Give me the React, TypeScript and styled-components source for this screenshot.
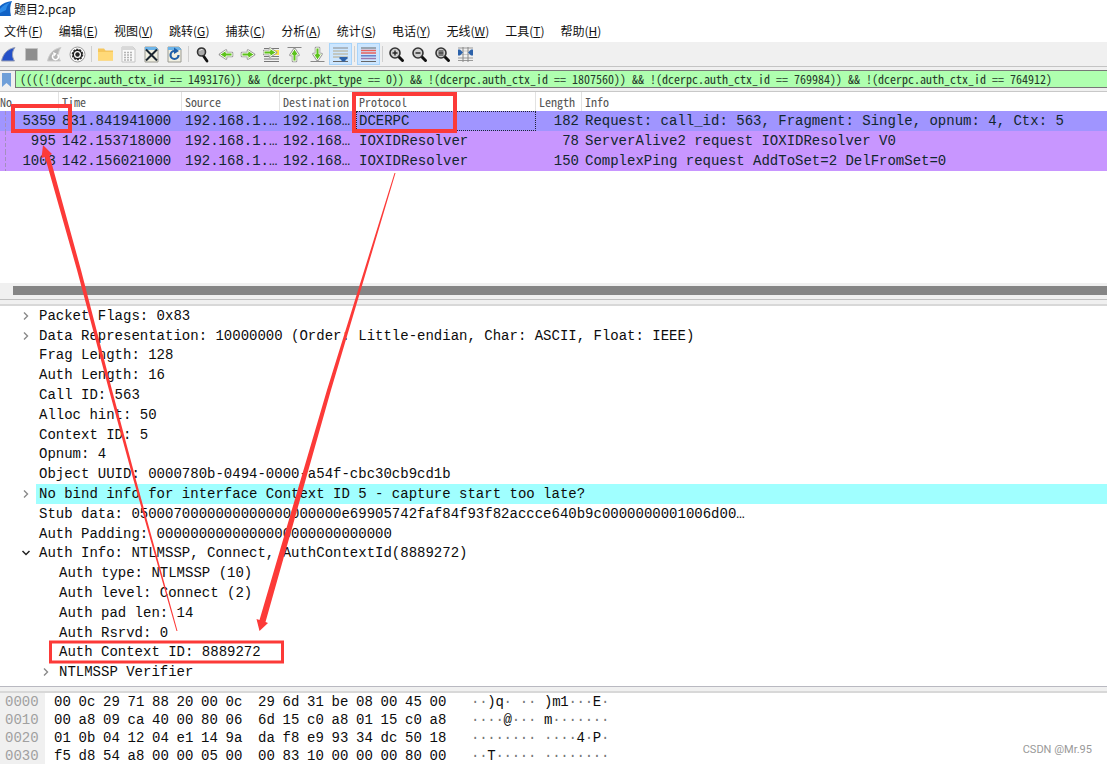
import React from 'react';
import styled, { createGlobalStyle, css } from 'styled-components';

const MONO = '"Liberation Mono", monospace';
const NARROW = '"Noto Sans Mono CJK SC", "Liberation Mono", monospace';
const UI = '"Noto Sans CJK SC", "Open Sans", sans-serif';

const GlobalStyle = createGlobalStyle`
  * { box-sizing: border-box; }
  body { margin: 0; background: #fff; color: #111; font-family: ${UI}; }
`;

const Page = styled.div`
  position: relative;
  display: flex;
  flex-direction: column;
  min-height: 100vh;
  overflow: hidden;
`;

const TitleBar = styled.header`
  display: flex;
  align-items: center;
  gap: 2px;
  height: 20px;
  font-size: 12px;
  line-height: 18px;
  padding-bottom: 2px;
`;

const MenuBar = styled.nav`
  display: flex;
  align-items: center;
  gap: 16px;
  height: 22px;
  padding-left: 4px;
`;

const MenuButton = styled.button`
  padding: 0;
  border: 0;
  background: none;
  color: #111;
  font: 12px/18px ${UI};
`;

const Toolbar = styled.div`
  display: flex;
  align-items: center;
  height: 25px;
  background: #f0f0f0;
  border-bottom: 1px solid #c4c4c4;
`;

const ToolGroup = styled.div`
  display: flex;
  &:first-child { margin-left: -3px; }
`;

const ToolButton = styled.button<{ $on?: boolean }>`
  display: flex;
  align-items: center;
  justify-content: center;
  width: 23px;
  height: 22px;
  padding: 0;
  border: 1px solid ${p => (p.$on ? '#a8d4fa' : 'transparent')};
  background: ${p => (p.$on ? '#cce6ff' : 'none')};
`;

const ToolDivider = styled.span`
  width: 5px;
  height: 16px;
  background: linear-gradient(#cfcfcf, #cfcfcf) center / 1px 100% no-repeat;
`;

const FilterBar = styled.div`
  display: flex;
  height: 25px;
  padding: 3px 0 3px;
  background: #f0f0f0;
  border-bottom: 1px solid #c8c8c8;
`;

const BookmarkButton = styled.button`
  display: flex;
  align-items: center;
  justify-content: center;
  width: 15px;
  padding: 0 2px 0 0;
  border: 0;
  border-top: 1px solid #9a9a9a;
  background: #f0f0f0;
`;

const FilterInput = styled.input`
  flex: 1;
  min-width: 0;
  padding: 0 4px;
  border: 1px solid #777;
  border-right: 0;
  background: #afffaf;
  color: #26382a;
  font: 12px/16px ${NARROW};
  outline: 0;
`;

const PacketPane = styled.section`
  display: flex;
  flex-direction: column;
  height: 208px;
`;

const PacketTable = styled.table`
  width: 100%;
  table-layout: fixed;
  border-collapse: separate;
  border-spacing: 0;
  font: 14px/18px ${MONO};
`;

const HeadCell = styled.th`
  height: 19px;
  padding: 0 0 0 3px;
  border-right: 1px solid #e2e2e2;
  color: #555;
  font: 12px/18px ${NARROW};
  text-align: left;
  white-space: nowrap;
  &:first-child { padding-left: 0; }
  &:last-child { border-right: 0; }
`;

const PacketRow = styled.tr<{ $selected?: boolean }>`
  background: ${p => (p.$selected ? '#a095ff' : '#c896ff')};
  color: #12272e;
`;

const Cell = styled.td<{ $right?: boolean; $focus?: boolean }>`
  height: 20px;
  padding: 0 3px;
  white-space: nowrap;
  text-align: ${p => (p.$right ? 'right' : 'left')};
  ${p => p.$focus && css`
    outline: 1px dotted #223;
    outline-offset: -1px;
  `}
  &:first-child {
    background: repeating-linear-gradient(#a58fbe 0 4px, transparent 4px 6px) 5px 0 / 1px 100% no-repeat;
  }
`;

const ScrollTrack = styled.div`
  margin-top: auto;
  height: 17px;
  padding: 3px 0 4px 13px;
  background: #f0f0f0;
  border-bottom: 1px solid #c0c0c0;
`;

const ScrollThumb = styled.div`
  height: 9px;
  background: #858585;
`;

const Splitter = styled.div`
  height: 6px;
  background: #f0f0f0;
  border-bottom: 2px solid #d8d8d8;
`;

const DetailPane = styled.section`
  flex: 1;
  display: flex;
  padding-bottom: 4px;
  border-bottom: 1px solid #b9b9c1;
`;

const Tree = styled.ul`
  flex: 1;
  display: grid;
  grid-auto-rows: minmax(19px, 1fr);
  margin: 0;
  padding: 0;
  list-style: none;
  color: #0c0c0c;
  font: 14px/18px ${MONO};
`;

const TreeItem = styled.li<{ $level: number }>`
  display: flex;
  align-items: stretch;
  padding-left: ${p => 16 + p.$level * 20}px;
`;

const Twisty = styled.button`
  display: flex;
  align-items: center;
  justify-content: center;
  width: 20px;
  padding: 0;
  border: 0;
  background: none;
`;

const TwistySpace = styled.span`
  width: 20px;
`;

const TreeText = styled.span<{ $mark?: boolean }>`
  flex: 1;
  display: flex;
  align-items: center;
  padding-left: 3px;
  white-space: pre;
  background: ${p => (p.$mark ? '#a0ffff' : 'none')};
`;

const HexPane = styled.section`
  height: 71px;
  background: linear-gradient(90deg, #f0f0f0 45px, #fff 45px);
  color: #0c0c0c;
  font: 14px/18px ${MONO};
`;

const HexRow = styled.div`
  display: flex;
  height: 18px;
`;

const Offset = styled.span`
  width: 54px;
  padding-left: 5px;
  color: #a0a0a0;
`;

const ByteGroup = styled.span`
  display: grid;
  grid-template-columns: repeat(8, minmax(0, 1fr));
  width: 196px;
  margin-right: 8px;
`;

const AsciiGroup = styled.span`
  display: grid;
  grid-template-columns: repeat(8, minmax(0, 1fr));
  width: 65px;
  margin-right: 8px;
  &:nth-last-child(2) { margin-left: 9px; }
`;

const AsciiChar = styled.span<{ $dot: boolean }>`
  color: ${p => (p.$dot ? '#777' : '#0c0c0c')};
`;

const Watermark = styled.span`
  position: absolute;
  right: 15px;
  bottom: 6px;
  color: #999;
  font: 11px/16px Roboto, sans-serif;
`;

const Annotations = styled.svg`
  position: absolute;
  left: 0;
  top: 0;
  pointer-events: none;
`;

const Icon = ({ children }: { children: React.ReactNode }) => (
  <svg width="17" height="17" viewBox="0 0 17 17" fill="none" aria-hidden="true">{children}</svg>
);

const FileBase = ({ faded }: { faded?: boolean }) => (
  <>
    <path d="M2 1h11l2 2v13H2z" fill={faded ? '#fafafa' : '#f1f0e2'} stroke={faded ? '#c4c4c4' : '#9a9a92'} />
    <path d="M2 1h11l2 2v1H2z" fill={faded ? '#d8d8d8' : '#6db4e8'} />
  </>
);

const Lens = ({ children }: { children?: React.ReactNode }) => (
  <Icon>
    <path d="M10.5 10.5l4 4" stroke="#111" strokeWidth="3" strokeLinecap="round" />
    <circle cx="7" cy="7" r="5" fill="#cfcfcf" stroke="#333" strokeWidth="1.6" />
    <path d="M4.5 7h5" stroke="#222" strokeWidth="1.4" />
    {children}
  </Icon>
);

const RIGHT = 'M2 7h6V4.500l6 4-6 4V10H2z';
const LEFT = 'M15 7H9V4.500l-6 4 6 4V10h6z';
const UP = 'M7 15V9H4.500l4-6 4 6H10v6z';
const DOWN = 'M7 2v6H4.500l4 6 4-6H10V2z';

const Arrow = ({ d }: { d: string }) => (
  <>
    <path d={d} fill="none" stroke="#999" strokeWidth="2.6" strokeLinejoin="round" />
    <path d={d} fill="#5cc21c" stroke="#f4fbe8" strokeWidth="1" />
  </>
);

type Tool = { label: string; icon: React.ReactNode; on?: boolean };

const toolGroups: Tool[][] = [
  [
    {
      label: '开始捕获',
      icon: <Icon><path d="M1.500 15C3 8 7 3 15 1.500 11.500 6 12 11 14.500 15z" fill="#2450c8" stroke="#9aa0b4" /></Icon>,
    },
    { label: '停止捕获', icon: <Icon><path d="M2.500 2.500h12v12h-12z" fill="#8e8e8e" stroke="#c2c2c2" /></Icon> },
    {
      label: '重新捕获',
      icon: (
        <Icon>
          <path d="M1.500 15C3 8 7 3 15 1.500 11.500 6 12 11 14.500 15z" fill="#b4b4b4" stroke="#cecece" />
          <path d="M11.500 8.500a3 3 0 1 1-4 0" stroke="#fff" strokeWidth="1.600" />
          <path d="M7 6l3.500 1.500-2.500 3z" fill="#fff" />
        </Icon>
      ),
    },
    {
      label: '捕获选项',
      icon: (
        <Icon>
          <circle cx="8.500" cy="8.500" r="7.500" fill="#fff" stroke="#999" />
          <circle cx="8.500" cy="8.500" r="5" stroke="#333" strokeWidth="1.600" strokeDasharray="2 1.100" />
          <circle cx="8.500" cy="8.500" r="4.200" stroke="#222" strokeWidth="1.400" />
          <circle cx="8.500" cy="8.500" r="2.200" fill="#222" />
        </Icon>
      ),
    },
  ],
  [
    {
      label: '打开',
      icon: (
        <Icon>
          <path d="M1 2.500h6l1.500 2H16v10H1z" fill="#f5c65c" />
          <path d="M1 6h15v8.500H1z" fill="#ffd978" />
        </Icon>
      ),
    },
    {
      label: '保存',
      icon: (
        <Icon>
          <FileBase faded />
          <path d="M4 6.500h9M4 9h9M4 11.500h9M4 14h9" stroke="#b4b4b4" strokeWidth="1.400" strokeDasharray="2 1" />
        </Icon>
      ),
    },
    { label: '关闭', icon: <Icon><FileBase /><path d="M3 3.500l11 11M14 3.500l-11 11" stroke="#1c2630" strokeWidth="2" /></Icon> },
    {
      label: '重新加载',
      icon: (
        <Icon>
          <FileBase />
          <path d="M12.500 9a4 4 0 1 1-4-4" stroke="#1f5fa8" strokeWidth="2.200" />
          <path d="M8 1.500L13 5 8 8z" fill="#1f5fa8" />
        </Icon>
      ),
    },
  ],
  [
    {
      label: '查找',
      icon: (
        <Icon>
          <path d="M9.500 10l3.500 5" stroke="#111" strokeWidth="2.800" strokeLinecap="round" />
          <circle cx="7.500" cy="6" r="4" fill="#aaa" stroke="#333" strokeWidth="1.600" />
          <path d="M5.500 5q1-2 3-1.500" stroke="#eee" />
        </Icon>
      ),
    },
    { label: '上一个分组', icon: <Icon><Arrow d={LEFT} /></Icon> },
    { label: '下一个分组', icon: <Icon><Arrow d={RIGHT} /></Icon> },
    {
      label: '转到分组',
      icon: (
        <Icon>
          <path d="M1 2.500h15M1 10.500h15M1 13h15M1 15.500h15" stroke="#777" />
          <path d="M11 4h5v5h-5z" fill="#ffe24a" />
          <g transform="translate(-1 -2)"><Arrow d={RIGHT} /></g>
        </Icon>
      ),
    },
    { label: '首个分组', icon: <Icon><path d="M1.500 1.500h14" stroke="#888" /><Arrow d={UP} /></Icon> },
    { label: '最新分组', icon: <Icon><path d="M1.500 15.500h14" stroke="#888" /><Arrow d={DOWN} /></Icon> },
    {
      label: '自动滚动',
      on: true,
      icon: (
        <Icon>
          <path d="M1 2h15" stroke="#888" />
          <path d="M1 5h15M1 8h15M1 11h15" stroke="#bdbdae" strokeWidth="1.500" />
          <path d="M1 15.500h15" stroke="#666" />
          <path d="M7.500 11h8v2l-1.500.500-1 2h-3l-1-2-1.500-.500z" fill="#2c62aa" />
        </Icon>
      ),
    },
  ],
  [
    {
      label: '着色',
      on: true,
      icon: (
        <Icon>
          <path d="M1 2h15M1 15.500h15" stroke="#666" />
          <path d="M1 4.500h15M1 7h15" stroke="#e8605c" strokeWidth="1.400" />
          <path d="M1 9.800h15" stroke="#5b78c4" strokeWidth="1.400" />
          <path d="M1 12.500h15" stroke="#9a78b0" strokeWidth="1.400" />
        </Icon>
      ),
    },
  ],
  [
    { label: '放大', icon: <Lens><path d="M7 4.500v5" stroke="#222" strokeWidth="1.400" /></Lens> },
    { label: '缩小', icon: <Lens /> },
    { label: '正常大小', icon: <Lens><path d="M4.500 5h5M4.500 9h5" stroke="#222" /></Lens> },
    {
      label: '调整列宽',
      icon: (
        <Icon>
          <path d="M1 2h15M1 12h15M1 14.500h15" stroke="#999" />
          <path d="M2 5h13M2 8.500h13" stroke="#ccc" />
          <path d="M6 1v15M11 1v15" stroke="#888" />
          <path d="M1 3.500h2l3 3-3 3H1zM16 3.500h-2l-3 3 3 3h2z" fill="#2c62aa" />
        </Icon>
      ),
    },
  ],
];

const menus: [string, string][] = [
  ['文件', 'F'], ['编辑', 'E'], ['视图', 'V'], ['跳转', 'G'], ['捕获', 'C'], ['分析', 'A'],
  ['统计', 'S'], ['电话', 'Y'], ['无线', 'W'], ['工具', 'T'], ['帮助', 'H'],
];

const filterText =
  '((((!(dcerpc.auth_ctx_id == 1493176)) && (dcerpc.pkt_type == 0)) && !(dcerpc.auth_ctx_id == 1807560)) && !(dcerpc.auth_ctx_id == 769984)) && !(dcerpc.auth_ctx_id == 764912)';

const columns: { name: string; width?: number }[] = [
  { name: 'No.', width: 59 },
  { name: 'Time', width: 123 },
  { name: 'Source', width: 98 },
  { name: 'Destination', width: 76 },
  { name: 'Protocol', width: 180 },
  { name: 'Length', width: 46 },
  { name: 'Info' },
];

const packets = [
  ['5359', '831.841941000', '192.168.1.…', '192.168…', 'DCERPC', '182', 'Request: call_id: 563, Fragment: Single, opnum: 4, Ctx: 5'],
  ['995', '142.153718000', '192.168.1.…', '192.168…', 'IOXIDResolver', '78', 'ServerAlive2 request IOXIDResolver V0'],
  ['1003', '142.156021000', '192.168.1.…', '192.168…', 'IOXIDResolver', '150', 'ComplexPing request AddToSet=2 DelFromSet=0'],
];

type Field = { text: string; level?: number; state?: 'open' | 'closed'; mark?: boolean };

const fields: Field[] = [
  { text: 'Packet Flags: 0x83', state: 'closed' },
  { text: 'Data Representation: 10000000 (Order: Little-endian, Char: ASCII, Float: IEEE)', state: 'closed' },
  { text: 'Frag Length: 128' },
  { text: 'Auth Length: 16' },
  { text: 'Call ID: 563' },
  { text: 'Alloc hint: 50' },
  { text: 'Context ID: 5' },
  { text: 'Opnum: 4' },
  { text: 'Object UUID: 0000780b-0494-0000-a54f-cbc30cb9cd1b' },
  { text: 'No bind info for interface Context ID 5 - capture start too late?', state: 'closed', mark: true },
  { text: 'Stub data: 0500070000000000000000000e69905742faf84f93f82accce640b9c0000000001006d00…' },
  { text: 'Auth Padding: 0000000000000000000000000000' },
  { text: 'Auth Info: NTLMSSP, Connect, AuthContextId(8889272)', state: 'open' },
  { text: 'Auth type: NTLMSSP (10)', level: 1 },
  { text: 'Auth level: Connect (2)', level: 1 },
  { text: 'Auth pad len: 14', level: 1 },
  { text: 'Auth Rsrvd: 0', level: 1 },
  { text: 'Auth Context ID: 8889272', level: 1 },
  { text: 'NTLMSSP Verifier', level: 1, state: 'closed' },
];

const dump = [
  ['0000', '00 0c 29 71 88 20 00 0c', '29 6d 31 be 08 00 45 00', '··)q· ··', ')m1···E·'],
  ['0010', '00 a8 09 ca 40 00 80 06', '6d 15 c0 a8 01 15 c0 a8', '····@···', 'm·······'],
  ['0020', '01 0b 04 12 04 e1 14 9a', 'da f8 e9 93 34 dc 50 18', '········', '····4·P·'],
  ['0030', 'f5 d8 54 a8 00 00 05 00', '00 83 10 00 00 00 80 00', '··T·····', '········'],
];

export default function App() {
  return (
    <Page>
      <GlobalStyle />
      <TitleBar>
        <svg width="12" height="16" viewBox="0 0 12 16" aria-hidden="true">
          <path d="M0 15V5Q4 1 12 0 9 6 11 15z" fill="#1263c6" />
          <path d="M0 8Q4 3 11 1 7 3 6 9L0 12z" fill="#2d8be8" />
        </svg>
        <span>题目2.pcap</span>
      </TitleBar>

      <MenuBar>
        {menus.map(([name, key]) => (
          <MenuButton key={key}>{name}(<u>{key}</u>)</MenuButton>
        ))}
      </MenuBar>

      <Toolbar>
        {toolGroups.map((group, i) => (
          <React.Fragment key={i}>
            {i > 0 && <ToolDivider />}
            <ToolGroup>
              {group.map(tool => (
                <ToolButton key={tool.label} aria-label={tool.label} $on={tool.on}>{tool.icon}</ToolButton>
              ))}
            </ToolGroup>
          </React.Fragment>
        ))}
      </Toolbar>

      <FilterBar>
        <BookmarkButton aria-label="书签">
          <svg width="9" height="14" viewBox="0 0 9 14" aria-hidden="true">
            <path d="M0 0h9v14L4.500 10 0 14z" fill="#6f9fd8" />
          </svg>
        </BookmarkButton>
        <FilterInput aria-label="显示过滤器" defaultValue={filterText} spellCheck={false} />
      </FilterBar>

      <PacketPane>
        <PacketTable>
          <colgroup>
            {columns.map(c => <col key={c.name} width={c.width} />)}
          </colgroup>
          <thead>
            <tr>{columns.map(c => <HeadCell key={c.name} scope="col">{c.name}</HeadCell>)}</tr>
          </thead>
          <tbody>
            {packets.map((packet, r) => (
              <PacketRow key={packet[0]} $selected={r === 0}>
                {packet.map((value, c) => (
                  <Cell key={c} $right={c === 0 || c === 5} $focus={r === 0 && c === 4}>{value}</Cell>
                ))}
              </PacketRow>
            ))}
          </tbody>
        </PacketTable>
        <ScrollTrack><ScrollThumb /></ScrollTrack>
      </PacketPane>
      <Splitter />

      <DetailPane>
        <Tree>
          {fields.map(field => (
            <TreeItem key={field.text} $level={field.level ?? 0}>
              {field.state ? (
                <Twisty aria-label={field.text} aria-expanded={field.state === 'open'}>
                  <svg width="10" height="10" viewBox="0 0 10 10" fill="none" aria-hidden="true">
                    {field.state === 'open'
                      ? <path d="M1.500 3L5 6.500 8.500 3" stroke="#222" strokeWidth="1.500" />
                      : <path d="M3 1.500L6.500 5 3 8.500" stroke="#8a8a8a" strokeWidth="1.400" />}
                  </svg>
                </Twisty>
              ) : <TwistySpace />}
              <TreeText $mark={field.mark}>{field.text}</TreeText>
            </TreeItem>
          ))}
        </Tree>
      </DetailPane>
      <Splitter />

      <HexPane>
        {dump.map(([offset, left, right, asciiLeft, asciiRight]) => (
          <HexRow key={offset}>
            <Offset>{offset}</Offset>
            {[left, right].map((bytes, g) => (
              <ByteGroup key={g}>{bytes.split(' ').map((b, i) => <span key={i}>{b}</span>)}</ByteGroup>
            ))}
            {[asciiLeft, asciiRight].map((chars, g) => (
              <AsciiGroup key={g}>
                {chars.split('').map((ch, i) => <AsciiChar key={i} $dot={ch === '·'}>{ch}</AsciiChar>)}
              </AsciiGroup>
            ))}
          </HexRow>
        ))}
      </HexPane>

      <Watermark>CSDN @Mr.95</Watermark>

      <Annotations width="600" height="700" viewBox="0 0 600 700" aria-hidden="true">
        <g fill="none" stroke="#fc3a38" strokeWidth="4">
          <path d="M13 106h57v25H13z" />
          <path d="M354 94h101v37H354z" />
          <path d="M50.500 642h232v20h-232z" strokeWidth="3" />
        </g>
        <g fill="#fc3a38">
          <path d="M43 145L52 154 49.500 155.500 81 270 112 390 136 480 177.500 631 176.500 631 133.500 480 109 390 77 270 45 157 41.500 158z" />
          <path d="M259.500 631L256.500 619 259.500 620 327 390 394.500 173 395.500 173 331 390 265.500 622 268 623z" />
        </g>
      </Annotations>
    </Page>
  );
}
